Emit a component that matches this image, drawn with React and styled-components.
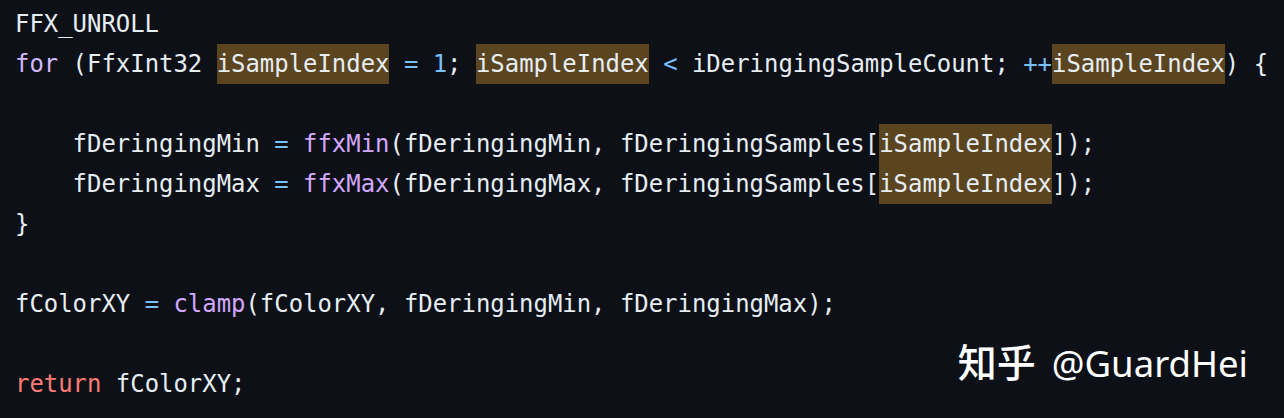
import React from 'react';
import styled, { createGlobalStyle } from 'styled-components';

const GlobalStyle = createGlobalStyle`
  html, body {
    margin: 0;
    padding: 0;
    background: #0d1117;
  }
`;

const colors = {
  plain: '#e6edf3',
  kw: '#d2b8ff',
  ret: '#ff7b72',
  op: '#79c0ff',
  num: '#79c0ff',
  fn: '#d2a8ff',
};

// each line is a list of [kind, text] tokens
const lines = [
  [['plain', 'FFX_UNROLL']],
  [
    ['kw', 'for'], ['plain', ' (FfxInt32 '], ['hl', 'iSampleIndex'], ['plain', ' '],
    ['op', '='], ['plain', ' '], ['num', '1'], ['plain', '; '], ['hl', 'iSampleIndex'],
    ['plain', ' '], ['op', '<'], ['plain', ' iDeringingSampleCount; '], ['op', '++'],
    ['hl', 'iSampleIndex'], ['plain', ') {'],
  ],
  [],
  [
    ['plain', '    fDeringingMin '], ['op', '='], ['plain', ' '], ['fn', 'ffxMin'],
    ['plain', '(fDeringingMin, fDeringingSamples['], ['hl', 'iSampleIndex'], ['plain', ']);'],
  ],
  [
    ['plain', '    fDeringingMax '], ['op', '='], ['plain', ' '], ['fn', 'ffxMax'],
    ['plain', '(fDeringingMax, fDeringingSamples['], ['hl', 'iSampleIndex'], ['plain', ']);'],
  ],
  [['plain', '}']],
  [],
  [
    ['plain', 'fColorXY '], ['op', '='], ['plain', ' '], ['fn', 'clamp'],
    ['plain', '(fColorXY, fDeringingMin, fDeringingMax);'],
  ],
  [],
  [['ret', 'return'], ['plain', ' fColorXY;']],
];

export default function App() {
  return (
    <>
      <GlobalStyle />
      <Page>
        <Code>
          {lines.map((tokens, i) => (
            <Line key={i}>
              {tokens.map(([kind, text], j) =>
                kind === 'hl' ? (
                  <Highlight key={j}>{text}</Highlight>
                ) : (
                  <Token key={j} $kind={kind}>{text}</Token>
                )
              )}
            </Line>
          ))}
        </Code>
        <Watermark>
          <Brand>知乎</Brand>
          <span>@GuardHei</span>
        </Watermark>
      </Page>
    </>
  );
}

const Page = styled.div`
  position: relative;
  width: 1284px;
  height: 418px;
  background: #0d1117;
  overflow: hidden;
`;

const Code = styled.pre`
  margin: 0;
  padding: 4px 0 0 15px;
  font-family: "DejaVu Sans Mono", "Liberation Mono", monospace;
  font-size: 23.93px;
  line-height: 40px;
  color: ${colors.plain};
  white-space: pre;
`;

const Line = styled.div`
  height: 40px;
`;

const Token = styled.span`
  color: ${p => colors[p.$kind]};
`;

const Highlight = styled.span`
  display: inline-block;
  height: 40px;
  vertical-align: top;
  background: #5b4520;
  color: ${colors.plain};
`;

const Watermark = styled.div`
  position: absolute;
  right: 36px;
  bottom: 30px;
  display: flex;
  align-items: baseline;
  gap: 16px;
  font-family: "Noto Sans", "Noto Sans CJK SC", sans-serif;
  font-size: 36.5px;
  color: #ffffff;
  white-space: nowrap;
`;

const Brand = styled.span`
  font-family: "Noto Sans CJK SC", sans-serif;
  font-size: 39px;
  font-weight: 500;
`;
